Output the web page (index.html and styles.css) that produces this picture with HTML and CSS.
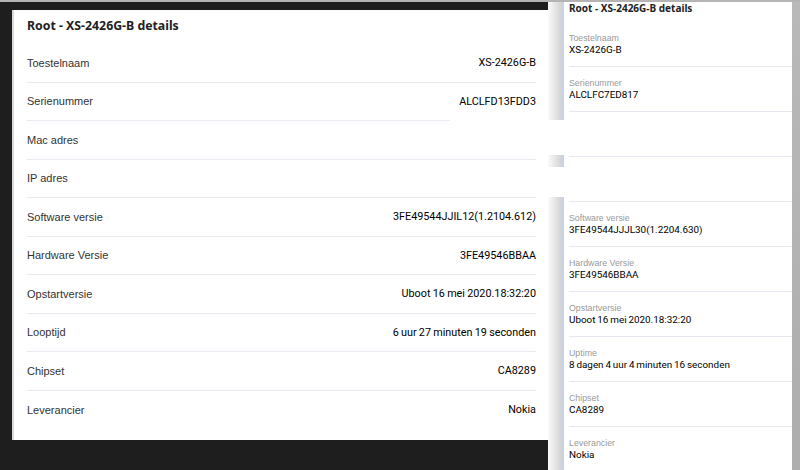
FILE: index.html
```html
<!DOCTYPE html>
<html lang="nl">
<head>
    <meta charset="UTF-8">
    <meta name="viewport" content="width=device-width, initial-scale=1.0">
    <title>Root - XS-2426G-B details</title>
    <link rel="stylesheet" href="styles.css">
</head>
<body>
    <div class="screen">
        <div class="main">
            <div class="card">
                <h1 class="card-title">Root - XS-2426G-B details</h1>
                <div class="row"><span class="label">Toestelnaam</span><span class="value">XS-2426G-B</span></div>
                <div class="row"><span class="label">Serienummer</span><span class="value">ALCLFD13FDD3</span></div>
                <div class="row"><span class="label">Mac adres</span><span class="value"></span></div>
                <div class="row"><span class="label">IP adres</span><span class="value"></span></div>
                <div class="row"><span class="label">Software versie</span><span class="value">3FE49544JJIL12(1.2104.612)</span></div>
                <div class="row"><span class="label">Hardware Versie</span><span class="value">3FE49546BBAA</span></div>
                <div class="row"><span class="label">Opstartversie</span><span class="value">Uboot 16 mei 2020.18:32:20</span></div>
                <div class="row"><span class="label">Looptijd</span><span class="value">6 uur 27 minuten 19 seconden</span></div>
                <div class="row"><span class="label">Chipset</span><span class="value">CA8289</span></div>
                <div class="row"><span class="label">Leverancier</span><span class="value">Nokia</span></div>
            </div>
        </div>

        <div class="side">
            <div class="side-shadow"></div>
            <div class="side-body">
                <h2 class="side-title">Root - XS-2426G-B details</h2>
                <div class="side-row"><div class="side-label">Toestelnaam</div><div class="side-value">XS-2426G-B</div></div>
                <div class="side-row"><div class="side-label">Serienummer</div><div class="side-value">ALCLFC7ED817</div></div>
                <div class="side-row"><div class="side-label">Mac adres</div><div class="side-value"></div></div>
                <div class="side-row"><div class="side-label">IP adres</div><div class="side-value"></div></div>
                <div class="side-row"><div class="side-label">Software versie</div><div class="side-value">3FE49544JJJL30(1.2204.630)</div></div>
                <div class="side-row"><div class="side-label">Hardware Versie</div><div class="side-value">3FE49546BBAA</div></div>
                <div class="side-row"><div class="side-label">Opstartversie</div><div class="side-value">Uboot 16 mei 2020.18:32:20</div></div>
                <div class="side-row"><div class="side-label">Uptime</div><div class="side-value">8 dagen 4 uur 4 minuten 16 seconden</div></div>
                <div class="side-row"><div class="side-label">Chipset</div><div class="side-value">CA8289</div></div>
                <div class="side-row last"><div class="side-label">Leverancier</div><div class="side-value">Nokia</div></div>
            </div>
            <div class="side-edge"></div>
        </div>

        <!-- witte vlakken over de samengevoegde schermafdrukken -->
        <div class="patch patch-a"></div>
        <div class="patch patch-b"></div>
    </div>
</body>
</html>
```

FILE: styles.css
```css
body {
    margin: 0;
    background-color: #1e1e1e;
    font-family: "Liberation Sans", Arial, sans-serif;
    color: #222;
}

.screen {
    position: relative;
    display: flex;
    width: 800px;
    height: 470px;
    box-sizing: border-box;
    border-top: 2px solid #b4b4b4;
    overflow: hidden;
}

.main {
    width: 548px;
    padding: 8px 0 0 12px;
    box-sizing: border-box;
}

.card {
    background-color: #fff;
    border-left: 2px solid #d9d9d9;
    padding: 0 12px 12px 13px;
    height: 430px;
    box-sizing: border-box;
}

.card-title {
    margin: 0;
    height: 34px;
    line-height: 32px;
    font-family: "Noto Sans", sans-serif;
    font-size: 12.3px;
    font-weight: 700;
    color: #222;
}

.row {
    display: flex;
    justify-content: space-between;
    align-items: center;
    height: 38.5px;
    box-sizing: border-box;
    border-bottom: 1px solid #e9ebf3;
    font-size: 11px;
}

.row:last-child {
    border-bottom: none;
}

.label {
    color: #333;
}

.value {
    font-family: Roboto, sans-serif;
    font-size: 10.8px;
    word-spacing: -0.4px;
    color: #000;
}

.side {
    display: flex;
    width: 252px;
}

.side-shadow {
    width: 13px;
    background: linear-gradient(to right, #fafafa, #d4d4d4);
}

.side-body {
    flex: 1;
    background-color: #fff;
    border-left: 3px solid #c9d3e7;
    padding-left: 5px;
}

.side-title {
    margin: 0;
    height: 20px;
    line-height: 12px;
    font-family: "Noto Sans", sans-serif;
    font-size: 10px;
    font-weight: 700;
    color: #222;
}

.side-row {
    height: 45px;
    box-sizing: border-box;
    padding-top: 11px;
    border-bottom: 1px solid #e6e8f1;
}

.side-row.last {
    border-bottom: none;
}

.side-label {
    font-size: 8.8px;
    line-height: 10px;
    color: #9a9a9a;
}

.side-value {
    font-family: Roboto, sans-serif;
    font-size: 9.9px;
    line-height: 14px;
    word-spacing: -0.6px;
    color: #000;
}

.side-edge {
    width: 8px;
    background: linear-gradient(to bottom, #b9b9b9, #adadad);
}

.patch {
    position: absolute;
    background-color: #fff;
}

.patch-a {
    left: 450px;
    top: 118px;
    width: 342px;
    height: 35px;
}

.patch-b {
    left: 548px;
    top: 165px;
    width: 244px;
    height: 30px;
}
```
